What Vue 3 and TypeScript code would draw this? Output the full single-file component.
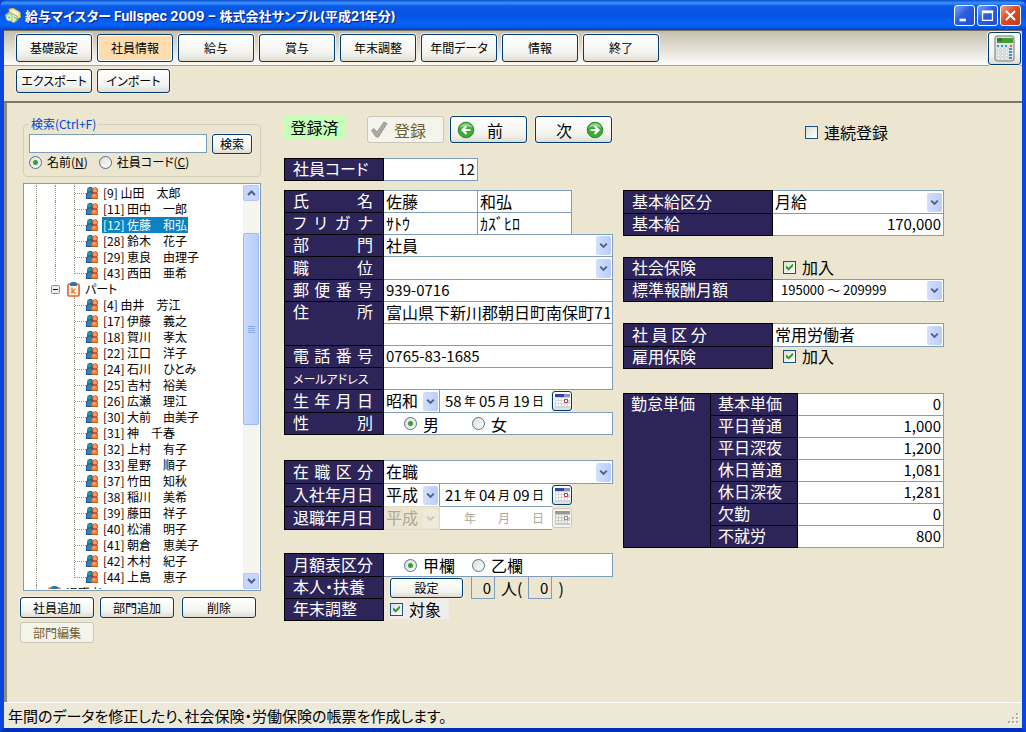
<script setup lang="ts">
import { ref } from 'vue'

interface TreeRow {
  kind: 'person' | 'group' | 'closed'
  text: string
  last?: boolean
}

const menu = ['基礎設定', '社員情報', '給与', '賞与', '年末調整', '年間データ', '情報', '終了']
const activeMenu = ref('社員情報')

const fullTime = ['[9] 山田　太郎', '[11] 田中　一郎', '[12] 佐藤　和弘', '[28] 鈴木　花子', '[29] 恵良　由理子', '[43] 西田　亜希']
const partTime = [
  '[4] 由井　芳江', '[17] 伊藤　義之', '[18] 賀川　孝太', '[22] 江口　洋子', '[24] 石川　ひとみ',
  '[25] 吉村　裕美', '[26] 広瀬　理江', '[30] 大前　由美子', '[31] 神　千春', '[32] 上村　有子',
  '[33] 星野　順子', '[37] 竹田　知秋', '[38] 稲川　美希', '[39] 藤田　祥子', '[40] 松浦　明子',
  '[41] 朝倉　恵美子', '[42] 木村　紀子', '[44] 上島　恵子',
]
const people = (names: string[]): TreeRow[] =>
  names.map((text, i) => ({ kind: 'person', text, last: i === names.length - 1 }))

const rows: TreeRow[] = [
  ...people(fullTime),
  { kind: 'group', text: 'パート' },
  ...people(partTime),
  { kind: 'closed', text: '退職者' },
]
const selected = ref('[12] 佐藤　和弘')
const inFullTime = (i: number) => i < fullTime.length

const rates = [
  { name: '基本単価', value: '0' },
  { name: '平日普通', value: '1,000' },
  { name: '平日深夜', value: '1,200' },
  { name: '休日普通', value: '1,081' },
  { name: '休日深夜', value: '1,281' },
  { name: '欠勤', value: '0' },
  { name: '不就労', value: '800' },
]
</script>

<template>
  <div class="window">
    <header class="titlebar">
      <svg class="app-icon" viewBox="0 0 16 16" aria-hidden="true">
        <path d="M4 1l4 -1 7 4 1 5-3 2-9-6z" fill="#f4dc86" stroke="#b99a3c" stroke-width=".6" />
        <path d="M6 2l5 1 3 3-2 3-5-3z" fill="#fff6cf" />
        <path d="M0 7l4-3 8 4 1 4-4 3-8-4z" fill="#d6eec6" stroke="#5b9150" stroke-width=".7" />
        <ellipse cx="4.300" cy="9.500" rx="3" ry="3.600" fill="#f2fbe9" stroke="#69a35c" stroke-width=".7" />
        <circle cx="4.300" cy="9.500" r="1.300" fill="#8cc27e" />
        <path d="M9 9l3 2-2 3" fill="none" stroke="#7ab26c" />
      </svg>
      <h1>給与マイスター Fullspec 2009 − 株式会社サンプル(平成21年分)</h1>
      <button type="button" class="sys" aria-label="最小化">
        <svg viewBox="0 0 21 21"><path d="M5 14h7v3H5z" fill="#fff" /></svg>
      </button>
      <button type="button" class="sys" aria-label="最大化">
        <svg viewBox="0 0 21 21"><path d="M5 6h11v10H5z" fill="none" stroke="#fff" stroke-width="1.400" /><path d="M4.300 5h12.400v3H4.300z" fill="#fff" /></svg>
      </button>
      <button type="button" class="sys close" aria-label="閉じる">
        <svg viewBox="0 0 21 21"><path d="M5.500 5.500l10 10M15.500 5.500l-10 10" stroke="#fff" stroke-width="2.300" /></svg>
      </button>
    </header>

    <div class="frame">
      <nav class="menu">
        <button
          v-for="m in menu"
          :key="m"
          type="button"
          class="btn menu-btn"
          :class="{ active: m === activeMenu }"
          @click="activeMenu = m"
        >{{ m }}</button>
        <button type="button" class="btn calc" aria-label="電卓">
          <svg viewBox="0 0 22 27" aria-hidden="true">
            <rect x="1" y="1" width="19" height="25" rx="3" fill="#dfe3e6" stroke="#9a9fa5" stroke-width="1.500" />
            <rect x="3" y="3" width="16" height="5" fill="#469a34" />
            <path d="M3 3h5v3H3z" fill="#2f7a24" />
            <g fill="#fff" stroke="#b4bac0" stroke-width=".6">
              <circle v-for="n in 12" :key="n" :cx="4.500 + ((n - 1) % 3) * 4" :cy="14 + Math.floor((n - 1) / 3) * 3.200" r="1.400" />
            </g>
            <path d="M3 10h2v2H3zM7 10h2v2H7zM11 10h2v2h-2zM15 13h3v2h-3zM15 16h3v2h-3zM15 19h3v2h-3zM15 22h3v2h-3z" fill="#3c93c2" />
            <path d="M16 10h2v2h-2z" fill="#e2661e" />
          </svg>
        </button>
      </nav>
      <div class="submenu">
        <button type="button" class="btn">エクスポート</button>
        <button type="button" class="btn">インポート</button>
      </div>

      <main class="body">
        <aside class="side">
          <fieldset class="search">
            <legend>検索(Ctrl+F)</legend>
            <div class="search-row">
              <input type="text" class="box search-box" aria-label="検索(Ctrl+F)">
              <button type="button" class="btn">検索</button>
            </div>
            <div class="search-kind">
              <label><input type="radio" name="kind" checked><span>名前(<u>N</u>)</span></label>
              <label><input type="radio" name="kind"><span>社員コード(<u>C</u>)</span></label>
            </div>
          </fieldset>

          <div class="tree">
            <ul>
              <li
                v-for="(r, i) in rows"
                :key="r.text"
                :class="[r.kind, { last: r.last }]"
              >
                <i class="rail" />
                <i v-if="r.kind !== 'closed'" class="rail" :class="{ blank: r.kind === 'person' && !inFullTime(i), node: r.kind === 'group' }">
                  <svg v-if="r.kind === 'group'" class="minus" viewBox="0 0 9 9" aria-hidden="true">
                    <rect x=".5" y=".5" width="8" height="8" rx="1" fill="#f1efe7" stroke="#7b8fa8" />
                    <path d="M2 4h5v1H2z" />
                  </svg>
                </i>
                <i v-if="r.kind === 'person'" class="rail leaf" />
                <svg v-if="r.kind === 'person'" class="people" viewBox="0 0 12 12" aria-hidden="true">
                  <path d="M0 12V7l1-1.500L1.500 1l2-1h2L7 2v3l1 2v5z" fill="#24509c" />
                  <circle cx="3.700" cy="2.700" r="2" fill="#3193a8" />
                  <path d="M1 11V7l2-1.500h3V11z" fill="#2e8b9b" />
                  <path d="M5 12V7.500L6.200 6 6 2.500 7.500.6h2.800L12 2.400 11.300 6l.7 1.500V12z" fill="#a3392e" />
                  <circle cx="8.900" cy="3.300" r="2.200" fill="#ff9a4c" />
                  <path d="M5.500 11.500V8L7 6.400h4l1 1.600v3.500z" fill="#ff7424" />
                  <path d="M6.500 7.500h3v2h-3z" fill="#ffb176" />
                </svg>
                <svg v-else class="clip" viewBox="0 0 13 15" aria-hidden="true">
                  <rect x=".9" y="2" width="11.200" height="12" rx="1.500" fill="#fff4e6" stroke="#e8601c" stroke-width="1.600" />
                  <path d="M3 1l2-1h3l2 1v3H3z" fill="#2c78b4" />
                  <path d="M5 5.500v6M8.500 6.800L5.400 9.200l3.200 2.500" fill="none" stroke="#f07a1c" stroke-width="1.400" />
                </svg>
                <button type="button" class="node-text" :class="{ selected: selected === r.text }" @click="selected = r.text">{{ r.text }}</button>
              </li>
            </ul>
            <div class="scroll">
              <button type="button" aria-label="上へ"><svg viewBox="0 0 9 6"><path d="M1 5l3.500-3.500L8 5" /></svg></button>
              <div class="track">
                <span class="before" />
                <span class="thumb"><i /><i /><i /><i /></span>
                <span class="after" />
              </div>
              <button type="button" aria-label="下へ"><svg viewBox="0 0 9 6"><path d="M1 1l3.500 3.500L8 1" /></svg></button>
            </div>
          </div>

          <div class="side-actions">
            <button type="button" class="btn">社員追加</button>
            <button type="button" class="btn">部門追加</button>
            <button type="button" class="btn">削除</button>
            <button type="button" class="btn" disabled>部門編集</button>
          </div>
        </aside>

        <form class="work" @submit.prevent>
          <div class="actions">
            <output class="state">登録済</output>
            <button type="submit" class="btn big" disabled>
              <svg viewBox="0 0 18 18" aria-hidden="true"><path d="M1.500 9.500L4 7.500l3 3.500L14 1l3 1.500L8.500 16H6z" fill="#a9a9a7" stroke="#8e8e8c" stroke-width=".8" /></svg>
              登録
            </button>
            <button type="button" class="btn big prev">
              <svg viewBox="0 0 18 18" aria-hidden="true">
                <circle cx="9" cy="9" r="7.800" fill="#3faa38" stroke="#2b8c2b" />
                <path d="M2.500 7a6.800 6.800 0 0 1 13 0c-4-2-9-2-13 0z" fill="#8ad67e" />
                <path d="M9.500 5L5.500 9l4 4M6 9h7.500" fill="none" stroke="#fff" stroke-width="2.200" />
              </svg>
              前
            </button>
            <button type="button" class="btn big next">
              次
              <svg viewBox="0 0 18 18" aria-hidden="true">
                <circle cx="9" cy="9" r="7.800" fill="#3faa38" stroke="#2b8c2b" />
                <path d="M2.500 7a6.800 6.800 0 0 1 13 0c-4-2-9-2-13 0z" fill="#8ad67e" />
                <path d="M8.500 5l4 4-4 4M12 9H4.500" fill="none" stroke="#fff" stroke-width="2.200" />
              </svg>
            </button>
          </div>
          <label class="keep"><input type="checkbox">連続登録</label>

          <div class="col">
            <div class="fields">
              <label class="cap" for="code">社員コード</label>
              <div class="val"><input id="code" class="box part num" type="text" value="12"></div>
            </div>

            <div class="fields second">
              <label class="cap spread" for="sei"><span>氏 名</span></label>
              <div class="val">
                <input id="sei" class="box part" type="text" value="佐藤">
                <input class="box part" type="text" value="和弘" aria-label="名">
              </div>
              <label class="cap spread" for="sei-kana"><span>フ リ ガ ナ</span></label>
              <div class="val">
                <input id="sei-kana" class="box part" type="text" value="ｻﾄｳ">
                <input class="box part" type="text" value="ｶｽﾞﾋﾛ" aria-label="名フリガナ">
              </div>
              <label class="cap spread" for="dept"><span>部 門</span></label>
              <div class="val"><span class="pick">
                <select id="dept" class="box"><option>社員</option><option>パート</option></select>
                <svg class="arrow" viewBox="0 0 15 20" aria-hidden="true"><path d="M4 8l3.500 3.500L11 8" /></svg>
              </span></div>
              <label class="cap spread tall" for="post"><span>職 位</span></label>
              <div class="val"><span class="pick">
                <select id="post" class="box"><option></option></select>
                <svg class="arrow" viewBox="0 0 15 20" aria-hidden="true"><path d="M4 8l3.500 3.500L11 8" /></svg>
              </span></div>
              <label class="cap spread" for="zip"><span>郵 便 番 号</span></label>
              <div class="val"><input id="zip" class="box digits" type="text" value="939-0716"></div>
              <label class="cap spread double" for="addr"><span>住 所</span></label>
              <div class="val stack">
                <input id="addr" class="box" type="text" value="富山県下新川郡朝日町南保町71">
                <input class="box" type="text" aria-label="住所2">
              </div>
              <label class="cap spread" for="tel"><span>電 話 番 号</span></label>
              <div class="val"><input id="tel" class="box digits" type="text" value="0765-83-1685"></div>
              <label class="cap kana" for="mail">メールアドレス</label>
              <div class="val"><input id="mail" class="box" type="text"></div>
              <label class="cap spread tall" for="birth-era"><span>生 年 月 日</span></label>
              <div class="val">
                <span class="pick era">
                  <select id="birth-era" class="box"><option>昭和</option><option>平成</option></select>
                  <svg class="arrow" viewBox="0 0 15 20" aria-hidden="true"><path d="M4 8l3.500 3.500L11 8" /></svg>
                </span>
                <span class="date">
                  <input type="text" value="58" aria-label="生年">年
                  <input type="text" value="05" aria-label="生月">月
                  <input type="text" value="19" aria-label="生日">日
                </span>
                <button type="button" class="btn cal" aria-label="カレンダー">
                  <svg viewBox="0 0 15 14" aria-hidden="true">
                    <path d="M0 0h15v14H0z" fill="#d3d3dc" /><path d="M0 0h9v3H0z" fill="#3142a8" /><path d="M9 0h6v3H9z" fill="#8d93b5" />
                    <path d="M1 4h2v2H1zM4 4h2v2H4zM7 4h2v2H7zM10 4h2v2h-2zM13 4h2v2h-2zM1 7h2v2H1zM4 7h2v2H4zM7 7h2v2H7zM1 10h2v2H1zM4 10h2v2H4zM7 10h2v2H7zM10 10h2v2h-2zM13 10h2v2h-2z" fill="#fff" />
                    <path d="M9.500 5.500h3v3h-3z" fill="#fff" stroke="#c03a34" />
                  </svg>
                </button>
              </div>
              <span class="cap spread"><span>性 別</span></span>
              <div class="val box choices" role="radiogroup" aria-label="性別">
                <label><input type="radio" name="sex" checked>男</label>
                <label><input type="radio" name="sex">女</label>
              </div>
            </div>

            <div class="fields third">
              <label class="cap spread tall" for="status"><span>在 職 区 分</span></label>
              <div class="val"><span class="pick">
                <select id="status" class="box"><option>在職</option><option>退職</option></select>
                <svg class="arrow" viewBox="0 0 15 20" aria-hidden="true"><path d="M4 8l3.500 3.500L11 8" /></svg>
              </span></div>
              <label class="cap tall" for="join-era">入社年月日</label>
              <div class="val">
                <span class="pick era">
                  <select id="join-era" class="box"><option>平成</option><option>昭和</option></select>
                  <svg class="arrow" viewBox="0 0 15 20" aria-hidden="true"><path d="M4 8l3.500 3.500L11 8" /></svg>
                </span>
                <span class="date">
                  <input type="text" value="21" aria-label="入社年">年
                  <input type="text" value="04" aria-label="入社月">月
                  <input type="text" value="09" aria-label="入社日">日
                </span>
                <button type="button" class="btn cal" aria-label="カレンダー">
                  <svg viewBox="0 0 15 14" aria-hidden="true">
                    <path d="M0 0h15v14H0z" fill="#d3d3dc" /><path d="M0 0h9v3H0z" fill="#3142a8" /><path d="M9 0h6v3H9z" fill="#8d93b5" />
                    <path d="M1 4h2v2H1zM4 4h2v2H4zM7 4h2v2H7zM10 4h2v2h-2zM13 4h2v2h-2zM1 7h2v2H1zM4 7h2v2H4zM7 7h2v2H7zM1 10h2v2H1zM4 10h2v2H4zM7 10h2v2H7zM10 10h2v2h-2zM13 10h2v2h-2z" fill="#fff" />
                    <path d="M9.500 5.500h3v3h-3z" fill="#fff" stroke="#c03a34" />
                  </svg>
                </button>
              </div>
              <label class="cap tall" for="leave-era">退職年月日</label>
              <div class="val off">
                <span class="pick era">
                  <select id="leave-era" class="box" disabled><option>平成</option></select>
                  <svg class="arrow" viewBox="0 0 15 20" aria-hidden="true"><path d="M4 8l3.500 3.500L11 8" /></svg>
                </span>
                <span class="date">
                  <input type="text" disabled aria-label="退職年">年
                  <input type="text" disabled aria-label="退職月">月
                  <input type="text" disabled aria-label="退職日">日
                </span>
                <button type="button" class="btn cal" disabled aria-label="カレンダー">
                  <svg viewBox="0 0 15 14" aria-hidden="true">
                    <path d="M0 0h15v14H0z" fill="#c9c9c6" /><path d="M0 0h15v3H0z" fill="#989894" />
                    <path d="M1 4h2v2H1zM4 4h2v2H4zM7 4h2v2H7zM10 4h2v2h-2zM13 4h2v2h-2zM1 7h2v2H1zM4 7h2v2H4zM7 7h2v2H7zM1 10h2v2H1zM4 10h2v2H4zM7 10h2v2H7zM10 10h2v2h-2zM13 10h2v2h-2z" fill="#f4f4f0" />
                    <path d="M9.500 5.500h3v3h-3z" fill="#fff" stroke="#8e8e8c" />
                  </svg>
                </button>
              </div>
            </div>

            <div class="fields fourth">
              <span class="cap tall">月額表区分</span>
              <div class="val box choices" role="radiogroup" aria-label="月額表区分">
                <label><input type="radio" name="tbl" checked>甲欄</label>
                <label><input type="radio" name="tbl">乙欄</label>
              </div>
              <span class="cap">本人・扶養</span>
              <div class="val family">
                <button type="button" class="btn">設定</button>
                <input type="text" class="count" value="0" readonly aria-label="扶養人数">
                <span>人(</span>
                <input type="text" class="count" value="0" readonly aria-label="内数">
                <span>)</span>
              </div>
              <span class="cap">年末調整</span>
              <div class="val">
                <label class="target"><input type="checkbox" checked>対象</label>
              </div>
            </div>
          </div>

          <div class="col right">
            <div class="fields">
              <label class="cap tall" for="pay-kind">基本給区分</label>
              <div class="val"><span class="pick">
                <select id="pay-kind" class="box"><option>月給</option><option>時給</option></select>
                <svg class="arrow" viewBox="0 0 15 20" aria-hidden="true"><path d="M4 8l3.500 3.500L11 8" /></svg>
              </span></div>
              <label class="cap" for="pay">基本給</label>
              <div class="val"><input id="pay" class="box num" type="text" value="170,000"></div>
            </div>
            <div class="fields">
              <span class="cap">社会保険</span>
              <div class="val join"><label><input type="checkbox" checked>加入</label></div>
              <label class="cap" for="std-pay">標準報酬月額</label>
              <div class="val"><span class="pick">
                <select id="std-pay" class="box range"><option>195000 ～ 209999</option></select>
                <svg class="arrow" viewBox="0 0 15 20" aria-hidden="true"><path d="M4 8l3.500 3.500L11 8" /></svg>
              </span></div>
            </div>
            <div class="fields">
              <label class="cap tall" for="emp-kind">社 員 区 分</label>
              <div class="val"><span class="pick">
                <select id="emp-kind" class="box"><option>常用労働者</option></select>
                <svg class="arrow" viewBox="0 0 15 20" aria-hidden="true"><path d="M4 8l3.500 3.500L11 8" /></svg>
              </span></div>
              <span class="cap">雇用保険</span>
              <div class="val join"><label><input type="checkbox" checked>加入</label></div>
            </div>

            <table class="rates">
              <colgroup><col class="c1"><col class="c2"><col></colgroup>
              <tbody>
                <tr v-for="(r, i) in rates" :key="r.name">
                  <th v-if="i === 0" :rowspan="rates.length" scope="rowgroup">勤怠単価</th>
                  <th scope="row"><label :for="'rate' + i">{{ r.name }}</label></th>
                  <td><input :id="'rate' + i" type="text" class="num" :value="r.value"></td>
                </tr>
              </tbody>
            </table>
          </div>
        </form>
      </main>

      <footer class="status">
        <p>年間のデータを修正したり、社会保険・労働保険の帳票を作成します。</p>
        <svg class="grip" viewBox="0 0 12 12" aria-hidden="true">
          <path d="M9 1h2v2H9zM5 5h2v2H5zM9 5h2v2H9zM1 9h2v2H1zM5 9h2v2H5zM9 9h2v2H9z" fill="#fff" />
          <path d="M8 0h2v2H8zM4 4h2v2H4zM8 4h2v2H8zM0 8h2v2H0zM4 8h2v2H4zM8 8h2v2H8z" fill="#b3ae98" />
        </svg>
      </footer>
    </div>
  </div>
</template>

<style>
html, body { margin: 0; background: #ece6d0; }
</style>

<style scoped>
.window, .window * { box-sizing: border-box; }
.window {
  --face: #ece6d0;
  --line: #7f9db9;
  --ink: #2d2459;
  display: flex;
  flex-direction: column;
  min-height: 100vh;
  background: #0a3fd8;
  color: #000;
  font-family: "Noto Sans CJK JP", "Liberation Sans", sans-serif;
  font-feature-settings: "palt";
  font-size: 16px;
  line-height: 20px;
}
button, input, select {
  font: inherit;
  font-feature-settings: inherit;
  color: inherit;
  margin: 0;
}
i { display: block; flex: none; }

/* title bar */
.titlebar {
  display: flex;
  align-items: center;
  gap: 2px;
  height: 30px;
  padding: 1px 5px 0;
  border-radius: 7px 7px 0 0;
  background: linear-gradient(#0a4fd0 0, #3c93ff 3px, #0a5be8 6px, #0553e0 14px, #0663fb 24px, #0559ec 27px, #0340b8 30px);
}
.app-icon { width: 16px; height: 16px; margin-right: 2px; }
.titlebar h1 {
  flex: 1;
  margin: 0;
  color: #fff;
  font-family: Inter, "Noto Sans CJK JP", sans-serif;
  font-size: 13px;
  font-weight: 700;
  line-height: 20px;
  white-space: nowrap;
  text-shadow: 1px 1px 1px #0a1883;
}
.sys {
  width: 21px;
  height: 21px;
  padding: 0;
  border: 1px solid #fff;
  border-radius: 3px;
  background: linear-gradient(135deg, #7ba2f5, #2a5de0 45%, #1f4fd2);
}
.sys svg { display: block; width: 19px; height: 19px; }
.sys.close { background: linear-gradient(135deg, #f0a088, #dc4a24 45%, #c23c18); }

.frame {
  display: flex;
  flex: 1;
  flex-direction: column;
  border: solid #0b45e0;
  border-width: 0 4px 4px;
  border-bottom-color: #0030b8;
  background: var(--face);
}

/* buttons */
.btn {
  padding: 0 2px;
  border: 1px solid #003c74;
  border-radius: 3px;
  background: linear-gradient(#fff, #f3f3ee 70%, #dfdcd2);
  box-shadow: 0 0 0 1px #f3eee0;
  font-size: 12px;
  line-height: 16px;
  white-space: nowrap;
}
.btn:disabled {
  border-color: #c9c7ba;
  background: #f5f4ea;
  box-shadow: none;
  color: #6e6030;
}
.menu {
  display: flex;
  align-items: center;
  gap: 5px;
  height: 36px;
  padding: 0 1px 0 12px;
  border-top: 1px solid #716f64;
  border-bottom: 1px solid #a8a390;
  background: linear-gradient(#c6bfae, #fdfdfb);
}
.menu-btn { width: 76px; height: 28px; }
.menu-btn.active { background: #ffdcae; box-shadow: inset 0 0 0 1px #fff; }
.calc { display: grid; place-items: center; width: 33px; height: 33px; margin-left: auto; }
.calc svg { width: 22px; height: 27px; }
.submenu {
  display: flex;
  gap: 5px;
  padding: 3px 12px 8px;
  border-bottom: 2px solid #78756a;
}
.submenu .btn { width: 76px; height: 24px; }
.submenu .btn + .btn { width: 73px; }

/* body */
.body {
  display: grid;
  flex: 1;
  grid-template-columns: minmax(241px, 241fr) minmax(0, 738fr);
  gap: 23px;
  padding-left: 13px;
  border-left: 3px solid #8e8b80;
}
.side { display: flex; flex-direction: column; padding: 14px 0 59px; }
.search {
  min-width: 0;
  margin: 0 0 6px 3px;
  padding: 3px 8px 7px 5px;
  border: 1px solid #d0cfba;
  border-radius: 4px;
  font-size: 12px;
}
.search legend { padding: 0 2px; color: #0046d5; line-height: 14px; }
.search-row { display: flex; gap: 5px; }
.search-box { flex: 1; min-width: 0; height: 19px; }
.search-row .btn { width: 40px; height: 20px; }
.search-kind { display: flex; gap: 11px; margin-top: 1px; line-height: 14px; }
.search-kind label { display: flex; align-items: center; gap: 5px; white-space: nowrap; }

.box {
  width: 100%;
  height: 100%;
  padding: 0 2px;
  border: 1px solid var(--line);
  border-radius: 0;
  background: #fff;
  outline: 0;
}

/* radio and tick boxes */
input[type="radio"], input[type="checkbox"] {
  display: grid;
  flex: none;
  place-items: center;
  width: 13px;
  height: 13px;
  appearance: none;
  border: 1px solid #1c5180;
  background: linear-gradient(135deg, #dcdcd7, #fff);
}
input[type="radio"] { border-radius: 50%; border-color: #4c7396; }
input[type="radio"]:checked::after {
  width: 5px;
  height: 5px;
  border-radius: 50%;
  background: #2ba52b;
  content: "";
}
input[type="checkbox"]:checked::after {
  width: 7px;
  height: 7px;
  background: #21a121;
  clip-path: polygon(0 30%, 38% 62%, 100% 0, 100% 40%, 38% 100%, 0 68%);
  content: "";
}

/* employee tree */
.tree {
  display: flex;
  flex: 1 1 0;
  min-height: 240px;
  margin-left: 3px;
  padding: 1px;
  border: 1px solid var(--line);
  background: #fff;
  overflow: hidden;
}
.tree ul { flex: 1 1 0; min-width: 0; margin: 0; padding: 0 0 0 11px; overflow: hidden; list-style: none; font-size: 12px; }
.tree li { display: flex; align-items: center; height: 16px; }
.rail { width: 19px; height: 16px; border-left: 1px dotted #9a9688; }
.rail.blank { border-color: transparent; }
.rail.node { display: flex; align-items: center; width: 12px; border: 0; }
.leaf { display: flex; width: 12px; align-items: center; }
.leaf::after { width: 12px; border-top: 1px dotted #9a9688; content: ""; }
.last .leaf {
  border-left: 0;
  background: repeating-linear-gradient(#9a9688 0 1px, transparent 1px 2px) 0 0 / 1px 8px no-repeat;
}
.minus { width: 9px; height: 9px; margin-left: -4px; }
.people { flex: none; width: 12px; height: 12px; margin-right: 4px; }
.clip { flex: none; width: 13px; height: 15px; margin-right: 4px; }
.closed .clip { margin-left: -7px; }
.node-text {
  height: 16px;
  padding: 0 1px;
  border: 0;
  background: none;
  line-height: 14px;
  white-space: pre;
}
.node-text.selected { background: #0a82c3; color: #fff; }
.scroll { display: flex; flex-direction: column; width: 16px; background: #f5f4ee; }
.scroll button {
  display: grid;
  place-items: center;
  height: 16px;
  padding: 0;
  border: 1px solid #b4c8f6;
  border-radius: 2px;
  background: #c6d6fc;
}
.scroll svg, .arrow { fill: none; stroke: #4d6185; stroke-width: 2; }
.scroll svg { width: 9px; height: 6px; }
.track { display: flex; flex: 1; flex-direction: column; }
.before { flex: 32; }
.thumb {
  display: flex;
  flex: 191;
  flex-direction: column;
  align-items: center;
  justify-content: center;
  gap: 1px;
  border: 1px solid #9db9f0;
  border-radius: 2px;
  background: linear-gradient(90deg, #cbdafd, #b8cdfc);
}
.thumb i { width: 7px; height: 1px; background: #8aa8ee; }
.after { flex: 148; }

.side-actions { display: flex; flex-wrap: wrap; gap: 4px 6px; margin-top: 6px; }
.side-actions .btn { width: 74px; height: 21px; }
.side-actions .btn:nth-child(3) { margin-left: 2px; }

/* form */
.work {
  display: grid;
  grid-template-columns: 329fr 321fr;
  grid-template-rows: auto 1fr;
  gap: 15px 10px;
  padding: 13px 78px 20px 0;
}
.actions { display: flex; align-items: flex-start; height: 27px; padding-right: 1px; }
.state { width: 61px; height: 24px; margin-right: auto; background: #c6ffb9; text-align: center; line-height: 22px; }
.big { display: flex; align-items: center; width: 77px; height: 27px; margin-left: 6px; font-size: 16px; }
.big.next { justify-content: flex-end; gap: 14px; margin-left: 8px; padding-right: 7px; }
.big.prev { gap: 12px; padding-left: 6px; }
.big:disabled { gap: 6px; }
.big svg { width: 18px; height: 18px; }
.keep { display: flex; align-items: center; gap: 6px; height: 32px; padding-left: 182px; margin-bottom: -5px; white-space: nowrap; }

.fields { display: grid; grid-template-columns: 100px minmax(0, 1fr); padding-top: 1px; }
.second { margin-top: 9px; }
.third { margin-top: 25px; }
.fourth { margin-top: 23px; }
.cap, .val { height: 23px; margin-top: -1px; white-space: nowrap; }
.cap.tall, .tall + .val { height: 24px; }
.cap.double, .double + .val { height: 45px; }
.cap {
  padding: 0 10px 0 8px;
  border: 1px solid #000;
  background: var(--ink);
  color: #fff;
  line-height: 19px;
}
.cap.tall { line-height: 20px; }
.spread span { display: block; text-align-last: justify; }
.cap.kana { padding-right: 0; font-size: 12px; line-height: 21px; }
.val { display: flex; min-width: 0; }
.val .box, .val.box { border-left: 0; }
.val input.box { padding-bottom: 2px; }
.part { flex: none; width: 41%; }
.stack { flex-direction: column; }
.stack .box { flex: none; height: 23px; }
.stack .box + .box { margin-top: -1px; }
.digits, .num { font-size: 15px; }
.num { text-align: right; }
.pick { display: grid; flex: 1; grid-template-rows: 100%; min-width: 0; }
.pick select { grid-area: 1 / 1; padding-bottom: 2px; appearance: none; line-height: 20px; }
.pick .arrow {
  grid-area: 1 / 1;
  align-self: center;
  justify-self: end;
  width: 15px;
  height: 19px;
  margin-right: 2px;
  border-radius: 2px;
  background: linear-gradient(90deg, #d3dffc, #b9cdf9);
  pointer-events: none;
}
.pick.era { flex: none; width: 56px; }
.date {
  display: flex;
  align-items: center;
  width: 112px;
  margin-top: 1px;
  padding-left: 4px;
  border-bottom: 1px solid var(--line);
  background: #fff;
  font-size: 12px;
}
.date input {
  width: 20px;
  height: 20px;
  padding: 0 1px;
  border: 0;
  background: none;
  font-size: 15px;
  line-height: 20px;
}
.date input + input { margin-left: 2px; }
.cal { display: grid; align-self: center; place-items: center; width: 20px; height: 20px; padding: 0; }
.cal svg { width: 15px; height: 14px; }
.off { color: #aca899; }
.off .pick .box { background: #ece6d0; border-color: #e0dac6; opacity: 1; }
.off .arrow { background: #eeebdd; stroke: #c9c7ba; }
.val.choices { width: auto; align-items: center; padding-left: 20px; }
.choices label, .join label, .target { display: flex; align-items: center; gap: 6px; }
.choices label { width: 68px; line-height: 18px; }
.join label { height: 20px; }
.family { align-items: center; padding-left: 6px; }
.family .btn { width: 73px; height: 20px; margin-right: 8px; }
.count { width: 24px; height: 23px; padding: 0 3px; border: 1px solid var(--line); background: none; font-size: 15px; text-align: right; }
.family span { padding: 0 6px; }
.target { height: 20px; margin: 1px 0 0 6px; padding-right: 8px; background: #efeeec; }

.right { padding-top: 32px; }
.right .fields { grid-template-columns: 150px minmax(0, 1fr); margin-bottom: 21px; }
.right .fields:nth-child(3) { margin-bottom: 24px; }
.join { padding-left: 10px; }
.range { padding-left: 8px; font-size: 13px; }
.rates { width: 100%; border-collapse: collapse; table-layout: fixed; }
.c1, .c2 { width: 87px; }
.rates th {
  height: 22px;
  padding: 0 7px;
  border: 1px solid #000;
  background: var(--ink);
  color: #fff;
  font-weight: 400;
  line-height: 19px;
  text-align: left;
  vertical-align: top;
  white-space: nowrap;
}
.rates td { height: 22px; padding: 0; border: 1px solid var(--line); background: #fff; }
.rates input { display: block; width: 100%; height: 21px; padding: 0 2px 2px; border: 0; background: none; }

/* status bar */
.status {
  display: flex;
  align-items: center;
  height: 26px;
  padding: 0 2px 0 4px;
  border-top: 1px solid #fff;
  background: #ece9d8;
  font-size: 15px;
}
.status p { flex: 1; margin: 0; }
.grip { align-self: flex-end; width: 12px; height: 12px; margin-bottom: 3px; }
</style>
